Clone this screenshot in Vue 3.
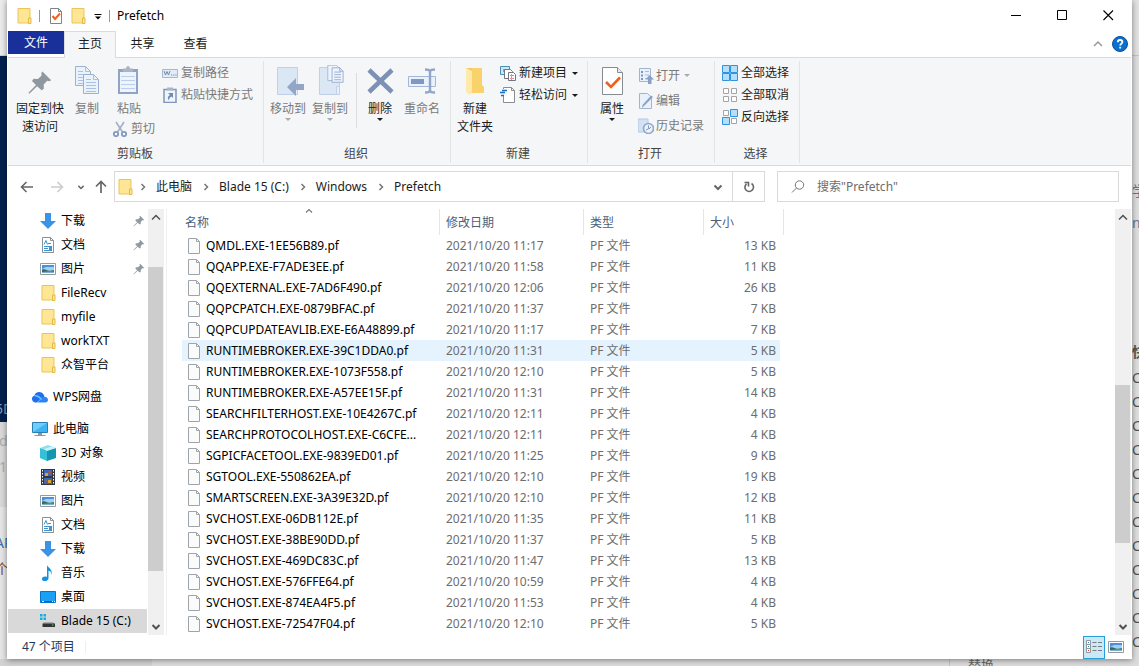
<script setup>
const folder = '<path d="M2 .5h12v14.5H2z" fill="#ffe694" stroke="#e8c55a"/><path d="M12.500 15V10h2.500v5.500h-2.500z" fill="#ffe694" stroke="#e3ba45"/>'
const pageFold = (c, f) => `<path d="M2.500 .5h8l3 3v12h-11z" fill="${f}" stroke="${c}"/><path d="M10.500 .5v3h3" fill="none" stroke="${c}"/>`
const picture = '<path d="M.5 2.500h15v11H.5z" fill="#fff" stroke="#919ba3"/><path d="M2 4h12v8H2z" fill="#9fd0f5"/><path d="M2 4h12v2H6L2 8z" fill="#4b8fe0"/><path d="M2 8.500c3-1 5 1 7 1.200s3-.7 5-.5V12H2z" fill="#356b62"/><path d="M2 11c4-.5 8-.8 12-.2V12H2z" fill="#7fb0c4"/>'
const pin = '<path d="M9.500 1l5.500 5.500-1.300.6-1.200-.2-2.200 2.300.1 2.600-1.400 1L6.200 10.300 1.300 14.900l-.5-.5 4.700-4.900L3 7l1-1.400 2.700.1L9 3.500 8.800 2z" fill="currentColor"/>'
const clip = (x) => `<path d="M5 4h20v25H5z" fill="#8fa3c4"/><path d="M7 7h16v20H7z" fill="#eef4fb"/><path d="M10 3.500h3c0-3.500 4-3.500 4 0h3V7H10z" fill="#a9b5c9"/>${x}`
const sheet = (x, y) => `<path d="M${x}.5 ${y}.5h10l5 5v14h-15z" fill="#eaf2fc" stroke="#9cb0cf"/><path d="M${x + 10}.5 ${y}.5v5h5M${x + 3} ${y + 5}.5h5M${x + 3} ${y + 8}.5h10M${x + 3} ${y + 11}.5h10M${x + 3} ${y + 14}.5h10M${x + 3} ${y + 17}.5h10" fill="none" stroke="#a9c0e0"/>`
const book = '<path d="M5.500 2.500h20v27h-20z" fill="#dce7f6" stroke="#c0d0e8"/><path d="M22.500 29.500v-8h3v8z" fill="#e8f0fa" stroke="#c0d0e8"/>'

const icons = {
  folder,
  pin,
  picture,
  page: pageFold('#a0a4a8', '#fafbfb'),
  check: pageFold('#7e8388', '#fff') + '<path d="M4.500 8l2.500 3 5-5.500" fill="none" stroke="#f0601c" stroke-width="2"/>',
  copy: sheet(4, 1) + sheet(12, 9),
  paste: clip('<path d="M8 11.500h14M8 15.500h14M8 19.500h14M8 23.500h14" stroke="#bdcfe8"/>'),
  cut: '<path d="M4 1l6.500 10M12 1L5.500 11" stroke="#a3b0c4" stroke-width="1.600" fill="none"/><circle cx="4" cy="13" r="2.200" fill="none" stroke="#8399bd" stroke-width="1.800"/><circle cx="12" cy="13" r="2.200" fill="none" stroke="#8399bd" stroke-width="1.800"/>',
  path: '<path d="M.5 4.500h15v8H.5z" fill="#e2ecf8" stroke="#a6b8d2"/><path d="M2 6l1.500 4L5 6.500 6.500 10 8 6M9 10h1.200M11.200 10h1.200M13.400 10h1.200" fill="none" stroke="#7488a9"/>',
  shortcut: '<path d="M2 2.500h12v13H2z" fill="#eef4fb" stroke="#8096bb" stroke-width="1.500"/><path d="M5 .5h6v3H5z" fill="#a9b5c9"/><path d="M6 6h5v5L9.500 9.500c-2 1-2.500 2-2.500 4C5 11 6 9 8 8z" fill="#7189b5"/>',
  moveTo: book + '<path d="M32 20h-8v-6l-9 9 9 9v-6h8z" transform="translate(0 -1)" fill="#93a6c6"/>',
  copyTo: book + '<g transform="translate(10 -1) scale(.85)"><path d="M4.500 1.500h10l4 4v14h-14z" fill="#eef4fc" stroke="#a1b4d2"/><path d="M9.500 4.500h9l4 4v13h-13z" fill="#eef4fc" stroke="#91a7ca"/><path d="M12 9.500h8M12 12.500h8M12 15.500h8M12 18.500h8M18.500 4.500v4h4" fill="none" stroke="#91a7ca"/></g>',
  remove: '<path d="M5 5l23 22M28 5L5 27" stroke="#7d90b5" stroke-width="4.500"/>',
  rename: '<path d="M2.500 11.500h27v10h-27z" fill="#e9f1fb" stroke="#a3b7d6"/><path d="M5 14h13v5H5z" fill="#8197bf"/><path d="M19 4.500c3 0 5 0 5 3v17c0 3-2 3-5 3M29 4.500c-3 0-5 0-5 3M24 24.500c0 3 2 3 5 3" fill="none" stroke="#91a5c8" stroke-width="2.400"/>',
  newFolder: '<path d="M13 3h10v17l2 2v6H11z" fill="#f9d26b"/><path d="M7 3l6 3v20l-2 4-4-3z" fill="#ffeaa9"/><path d="M7 3h6v3z" fill="#f4c95c"/>',
  newItem: '<path d="M.5 1.500h9v8h-9z" fill="#c8eaf8" stroke="#4e8db5"/><path d="M3 4h4v3H3z" fill="#58b4da"/><path d="M4.500 4.500h6l2 2v7h-8z" fill="#fff" stroke="#71777c"/><path d="M8.500 7.500h5l2 2v6h-7z" fill="#fff" stroke="#71777c"/><path d="M10 10.500h4M10 13.500h4" stroke="#d88a9c"/><path d="M11.500 9v6" stroke="#8cb1e0"/>',
  access: '<path d="M3.500 .5h8l3 3v12h-11z" fill="#fff" stroke="#8a8e92"/><path d="M11.500 .5v3h3" fill="none" stroke="#8a8e92"/><path d="M0 2h7v7H0z" fill="#f5f6f7"/><path d="M2 3.500h5M0 5.500h5M1 8.500h3" stroke="#1f6fc0" stroke-width="1.300"/>',
  properties: '<path d="M6.500 2.500h15l5 5v22h-20z" fill="#fff" stroke="#888c90"/><path d="M21.500 2.500v5h5" fill="#e6e8ea" stroke="#888c90"/><path d="M10 17l5 5L24 12.500" stroke="#f25f1a" stroke-width="2.600" fill="none"/>',
  open: '<path d="M1.500 .5h11v13h-11z" fill="#e9f1fb" stroke="#a2b4d0"/><path d="M3 3h2v2H3zM3 6.500h2v2H3zM3 10h2v2H3z" fill="#7f97bf"/><path d="M7 3.500h4M7 7h4M7 10.500h2" stroke="#a9bddb"/><path d="M11.500 7L7.500 11.500h2.500V16h3.500v-4.500H16z" fill="#8a9fc4"/>',
  edit: '<path d="M1.500 .5h8l4 4v11h-12z" fill="#e9f1fb" stroke="#a2b4d0"/><path d="M15 4L6 13l-2 2 .5-3L13 2.500z" fill="#8ba1c6"/>',
  history: '<path d="M0 1h10v13H0z" fill="#d3e1f4" stroke="#b5c8e4"/><circle cx="10.500" cy="10.500" r="5" fill="#eaf2fb" stroke="#91a6c9" stroke-width="1.600"/><path d="M10.500 7.500v3.300L8 12M11 11l2-2" stroke="#8197bf" fill="none"/>',
  selectAll: '<path d="M.5 .5h7v7h-7zM8.500 .5h7v7h-7zM.5 8.500h7v7h-7zM8.500 8.500h7v7h-7z" fill="#b4defa" stroke="#2f93e0"/>',
  selectNone: '<path d="M1.500 1.500h5v5h-5zM9.500 1.500h5v5h-5zM1.500 9.500h5v5h-5zM9.500 9.500h5v5h-5z" fill="#fff" stroke="#a2a4a6"/>',
  invert: '<path d="M1.500 1.500h5v5h-5zM9.500 9.500h5v5h-5z" fill="#fff" stroke="#a2a4a6"/><path d="M8.500 .5h7v7h-7zM.5 8.500h7v7h-7z" fill="#b4defa" stroke="#2f93e0"/>',
  download: '<path d="M5 0h6v8h5l-8 8-8-8h5z" fill="#3a93e4"/>',
  document: pageFold('#8c9196', '#fff') + '<path d="M4 7.500l2-4 1.500 4M8 6.500h3M4 9.500h8M4 11.500h4M4 13.500h8" fill="none" stroke="#3a92cf"/><path d="M9 10h3v3H9z" fill="#4f93b8"/>',
  cloud: '<path d="M3 13.500a3.600 3.600 0 0 1-.5-7C3 3 9 1.500 11.500 5.500c2 2 0 4-3 4.500L5 13.500z" fill="#1f6ff0"/><path d="M5.500 13.500l4-4.500c2-2.500 6.500-1.200 6.500 1.800 0 1.700-1 2.700-3 2.700z" fill="#2b85f5"/><path d="M2.500 6.800c3-.8 5 1 7 3.700" fill="none" stroke="#63c1ff" stroke-width="1.500"/>',
  pc: '<path d="M.5 1.500h15v10H.5z" fill="#3fb4f4" stroke="#2a7fb0"/><path d="M1 2h14L1 11z" fill="#6fcdf9"/><path d="M6 12h4v2h3.500v1H2.500v-1H6z" fill="#7f9bab"/>',
  cube: '<path d="M8 0l8 3-7 3.500L0 3z" fill="#8be0ec"/><path d="M0 3l7 2.500V16L0 13z" fill="#35c0d8"/><path d="M7 5.500L16 3v10l-9 3z" fill="#1495b0"/><path d="M4 4l8-2.500 4 1.500-9 3z" fill="#c8f3f8"/>',
  video: '<path d="M1 0h14v16H1z" fill="#34383c"/><path d="M4 1h8v6H4zM4 9h8v6H4z" fill="#3a68b8"/><path d="M5 4h3v3H5zM8 11h3v3H8z" fill="#e0a22c"/><path d="M8 2h3v3H8zM5 10h2v3H5z" fill="#b34d3d"/><path d="M2.500 1v14M13.500 1v14" stroke="#fff" stroke-dasharray="1.500 1.500"/>',
  music: '<path d="M7 0c1 3 6 4 4.500 10 0-3-1.500-4-3-4.200V13c0 4-7 4-6.500.8.200-2 3-2.800 5-1.800z" fill="#1191e8"/>',
  desktop: '<path d="M.5 2.500h15v11H.5z" fill="#1ba0f6" stroke="#0a74c4"/><path d="M1 12.500h14" stroke="#0b5fa5"/><path d="M2 12.500h2M12 12.500h1M14 12.500h1" stroke="#fff"/>',
  drive: '<path d="M0 1h2.500v2.500H0zM3.500 1H6v2.500H3.500zM0 4.500h2.500V7H0zM3.500 4.500H6V7H3.500z" fill="#12afe0"/><path d="M4 9h9l2 2H2.500z" fill="#a9adb0"/><path d="M2.500 10.500H15V14H2.500z" fill="#303438"/><path d="M12 12h1.500" stroke="#58e05a"/>',
  back: '<path d="M14 8H2.500M7.500 3l-5 5 5 5" fill="none" stroke="currentColor" stroke-width="1.600"/>',
  forward: '<path d="M2 8h11.500M8.500 3l5 5-5 5" fill="none" stroke="currentColor" stroke-width="1.600"/>',
  up: '<path d="M8 14V3M3 7.500L8 2.500l5 5" fill="none" stroke="currentColor" stroke-width="1.700"/>',
  chevDown: '<path d="M4.500 6.500L8 10l3.500-3.500" fill="none" stroke="currentColor" stroke-width="2"/>',
  chevUp: '<path d="M4 10l4-4 4 4" fill="none" stroke="currentColor" stroke-width="1.500"/>',
  chevRight: '<path d="M6.500 5l3 3-3 3" fill="none" stroke="currentColor" stroke-width="1.500"/>',
  refresh: '<path d="M11.200 5a4.300 4.300 0 1 1-5-.8M3.500 3.500h4v4" transform="matrix(-1 0 0 1 16 0)" fill="none" stroke="none"/><path d="M10.500 4.500a4.300 4.300 0 1 1-5 .3M3.500 3.500h4v4" fill="none" stroke="currentColor" stroke-width="1.600"/>',
  search: '<circle cx="9.500" cy="6" r="4.200" fill="none" stroke="currentColor"/><path d="M6.500 9L2 13.500" stroke="currentColor"/>',
  min: '<path d="M3 7.500h10" stroke="#000"/>',
  max: '<path d="M3.500 2.500h9v9h-9z" stroke="#000" fill="none"/>',
  close: '<path d="M3.500 2.500l9.500 9.500M13 2.500L3.500 12" stroke="#000" stroke-width="1.100"/>',
  menu: '<path d="M4.500 6.500h7" stroke="#000"/><path d="M5 8.500h6L8 11.500z" fill="#000"/>',
  help: '<circle cx="8" cy="8" r="7.500" fill="#0b6fd0" stroke="#0a4f9a"/><path d="M5.800 6.200c0-3 4.600-2.800 4.600-.2 0 1.700-2.200 1.700-2.200 3.400M8.200 10.800v1.700" stroke="#fff" stroke-width="1.800" fill="none"/>',
  details: '<path d="M.5 1.500h4v4h-4zM.5 5.500h4v4h-4zM.5 9.500h4v4h-4z" fill="#fff" stroke="#94999d"/><path d="M2 3h1v1H2z" fill="#3a78c8"/><path d="M2 7h1v1H2z" fill="#28927f"/><path d="M2 11h1v1H2z" fill="#d03a3a"/><path d="M6.500 3.500h4M12 3.500h4M6.500 7.500h4M12 7.500h4M6.500 11.500h4M12 11.500h4" stroke="#777c80"/>'
}

const crumbs = ['此电脑', 'Blade 15 (C:)', 'Windows', 'Prefetch']
const tree = [
  { icon: 'download', name: '下载', pinned: true },
  { icon: 'document', name: '文档', pinned: true },
  { icon: 'picture', name: '图片', pinned: true },
  { icon: 'folder', name: 'FileRecv' },
  { icon: 'folder', name: 'myfile' },
  { icon: 'folder', name: 'workTXT' },
  { icon: 'folder', name: '众智平台' },
  { icon: 'cloud', name: 'WPS网盘', root: true },
  { icon: 'pc', name: '此电脑', root: true },
  { icon: 'cube', name: '3D 对象' },
  { icon: 'video', name: '视频' },
  { icon: 'picture', name: '图片' },
  { icon: 'document', name: '文档' },
  { icon: 'download', name: '下载' },
  { icon: 'music', name: '音乐' },
  { icon: 'desktop', name: '桌面' },
  { icon: 'drive', name: 'Blade 15 (C:)', selected: true }
]
const files = [
  ['QMDL.EXE-1EE56B89.pf', '11:17', 13],
  ['QQAPP.EXE-F7ADE3EE.pf', '11:58', 11],
  ['QQEXTERNAL.EXE-7AD6F490.pf', '12:06', 26],
  ['QQPCPATCH.EXE-0879BFAC.pf', '11:37', 7],
  ['QQPCUPDATEAVLIB.EXE-E6A48899.pf', '11:17', 7],
  ['RUNTIMEBROKER.EXE-39C1DDA0.pf', '11:31', 5],
  ['RUNTIMEBROKER.EXE-1073F558.pf', '12:10', 5],
  ['RUNTIMEBROKER.EXE-A57EE15F.pf', '11:31', 14],
  ['SEARCHFILTERHOST.EXE-10E4267C.pf', '12:11', 4],
  ['SEARCHPROTOCOLHOST.EXE-C6CFE...', '12:11', 4],
  ['SGPICFACETOOL.EXE-9839ED01.pf', '11:25', 9],
  ['SGTOOL.EXE-550862EA.pf', '12:10', 19],
  ['SMARTSCREEN.EXE-3A39E32D.pf', '12:10', 12],
  ['SVCHOST.EXE-06DB112E.pf', '11:35', 11],
  ['SVCHOST.EXE-38BE90DD.pf', '11:37', 5],
  ['SVCHOST.EXE-469DC83C.pf', '11:47', 13],
  ['SVCHOST.EXE-576FFE64.pf', '10:59', 4],
  ['SVCHOST.EXE-874EA4F5.pf', '11:53', 4],
  ['SVCHOST.EXE-72547F04.pf', '12:10', 5]
]
const hovered = 5
</script>

<template>
  <div class="screen">
    <div class="behind-left" aria-hidden="true">
      <div class="bl-top"></div>
      <div class="bl-navy"><span>5D</span></div>
      <div class="bl-mid"><span>d</span><span>1</span></div>
      <div class="bl-low"><span class="blue">AP</span><span>个别</span></div>
    </div>

    <div class="window">
      <header class="titlebar">
        <svg class="i16" viewBox="0 0 16 16" v-html="icons.folder" />
        <i class="tick"></i>
        <button class="quick" aria-label="属性"><svg class="i16" viewBox="0 0 16 16" v-html="icons.check" /></button>
        <button class="quick" aria-label="新建文件夹"><svg class="i16" viewBox="0 0 16 16" v-html="icons.folder" /></button>
        <button class="quick narrow" aria-label="自定义快速访问工具栏"><svg class="i16" viewBox="0 0 16 16" v-html="icons.menu" /></button>
        <i class="tick"></i>
        <span class="title">Prefetch</span>
        <div class="controls">
          <button aria-label="最小化"><svg class="i16" viewBox="0 0 16 16" v-html="icons.min" /></button>
          <button aria-label="最大化"><svg class="i16" viewBox="0 0 16 16" v-html="icons.max" /></button>
          <button aria-label="关闭"><svg class="i16" viewBox="0 0 16 16" v-html="icons.close" /></button>
        </div>
      </header>

      <nav class="tabs">
        <button class="tab file">文件</button>
        <button class="tab active">主页</button>
        <button class="tab">共享</button>
        <button class="tab">查看</button>
        <div class="tab-tools">
          <button class="collapse" aria-label="折叠功能区"><svg class="i16" viewBox="0 0 16 16" v-html="icons.chevUp" /></button>
          <button aria-label="帮助"><svg class="i16" viewBox="0 0 16 16" v-html="icons.help" /></button>
        </div>
      </nav>

      <section class="ribbon">
        <div class="group g-clip">
          <div class="tools">
            <button class="big wide"><svg class="i32 pin-lg" viewBox="-2 -3 20 20" v-html="icons.pin" />固定到快<br>速访问</button>
            <button class="big off slim"><svg class="i32" viewBox="0 0 32 32" v-html="icons.copy" />复制</button>
            <div class="stack paste-col">
              <button class="big off slim"><svg class="i32" viewBox="0 0 32 32" v-html="icons.paste" />粘贴</button>
              <button class="small off"><svg class="i16" viewBox="0 0 16 16" v-html="icons.cut" />剪切</button>
            </div>
            <div class="stack">
              <button class="small off"><svg class="i16" viewBox="0 0 16 16" v-html="icons.path" />复制路径</button>
              <button class="small off"><svg class="i16" viewBox="0 0 16 16" v-html="icons.shortcut" />粘贴快捷方式</button>
            </div>
          </div>
          <div class="caption">剪贴板</div>
        </div>
        <div class="group g-org">
          <div class="tools">
            <button class="big off"><svg class="i32" viewBox="0 0 32 32" v-html="icons.moveTo" />移动到<i class="drop"></i></button>
            <button class="big off"><svg class="i32" viewBox="0 0 32 32" v-html="icons.copyTo" />复制到<i class="drop"></i></button>
            <i class="rule"></i>
            <button class="big slim"><svg class="i32" viewBox="0 0 32 32" v-html="icons.remove" />删除<i class="drop"></i></button>
            <button class="big off rename"><svg class="i32" viewBox="0 0 32 32" v-html="icons.rename" />重命名</button>
          </div>
          <div class="caption">组织</div>
        </div>
        <div class="group g-new">
          <div class="tools">
            <button class="big"><svg class="i32" viewBox="0 0 32 32" v-html="icons.newFolder" />新建<br>文件夹</button>
            <div class="stack">
              <button class="small"><svg class="i16" viewBox="0 0 16 16" v-html="icons.newItem" />新建项目<i class="drop"></i></button>
              <button class="small"><svg class="i16" viewBox="0 0 16 16" v-html="icons.access" />轻松访问<i class="drop"></i></button>
            </div>
          </div>
          <div class="caption">新建</div>
        </div>
        <div class="group g-open">
          <div class="tools">
            <button class="big"><svg class="i32" viewBox="0 0 32 32" v-html="icons.properties" />属性<i class="drop"></i></button>
            <div class="stack loose">
              <button class="small off"><svg class="i16" viewBox="0 0 16 16" v-html="icons.open" />打开<i class="drop"></i></button>
              <button class="small off"><svg class="i16" viewBox="0 0 16 16" v-html="icons.edit" />编辑</button>
              <button class="small off"><svg class="i16" viewBox="0 0 16 16" v-html="icons.history" />历史记录</button>
            </div>
          </div>
          <div class="caption">打开</div>
        </div>
        <div class="group g-sel">
          <div class="tools">
            <div class="stack">
              <button class="small"><svg class="i16" viewBox="0 0 16 16" v-html="icons.selectAll" />全部选择</button>
              <button class="small"><svg class="i16" viewBox="0 0 16 16" v-html="icons.selectNone" />全部取消</button>
              <button class="small"><svg class="i16" viewBox="0 0 16 16" v-html="icons.invert" />反向选择</button>
            </div>
          </div>
          <div class="caption">选择</div>
        </div>
      </section>

      <div class="navbar">
        <div class="history">
          <button aria-label="返回"><svg class="i16" viewBox="0 0 16 16" v-html="icons.back" /></button>
          <button class="faint" aria-label="前进"><svg class="i16" viewBox="0 0 16 16" v-html="icons.forward" /></button>
          <button class="tiny" aria-label="最近浏览的位置"><svg class="i12" viewBox="0 0 16 16" v-html="icons.chevDown" /></button>
          <button aria-label="上移"><svg class="i16" viewBox="0 0 16 16" v-html="icons.up" /></button>
        </div>
        <div class="address">
          <svg class="i16" viewBox="0 0 16 16" v-html="icons.folder" />
          <template v-for="(c, i) in crumbs" :key="c">
            <svg class="i16 sep" :class="{ first: i === 0 }" viewBox="0 0 16 16" v-html="icons.chevRight" />
            <a href="#">{{ c }}</a>
          </template>
          <button class="open-list" aria-label="以前的位置"><svg class="i16" viewBox="0 0 16 16" v-html="icons.chevDown" /></button>
          <button class="reload" aria-label="刷新"><svg class="i16" viewBox="0 0 16 16" v-html="icons.refresh" /></button>
        </div>
        <label class="search">
          <svg class="i16" viewBox="0 0 16 16" v-html="icons.search" />
          <input type="text" aria-label="搜索" placeholder="搜索&quot;Prefetch&quot;">
        </label>
      </div>

      <div class="body">
        <nav class="tree">
          <a v-for="(t, i) in tree" :key="i" href="#" :class="{ root: t.root, selected: t.selected }">
            <svg class="i16" viewBox="0 0 16 16" v-html="icons[t.icon]" />
            <span>{{ t.name }}</span>
            <svg v-if="t.pinned" class="i12 pinned" viewBox="0 0 16 16" v-html="icons.pin" />
          </a>
        </nav>
        <div class="scroll tree-scroll">
          <svg class="i16" viewBox="0 0 16 16" v-html="icons.chevUp" />
          <i class="before"></i><i class="thumb"></i><i class="after"></i>
          <svg class="i16" viewBox="0 0 16 16" v-html="icons.chevDown" />
        </div>
        <main class="list">
          <table>
            <thead>
              <tr>
                <th class="c-name">名称<svg class="i12 sort" viewBox="0 0 16 16" v-html="icons.chevUp" /></th>
                <th class="c-date">修改日期</th>
                <th class="c-type">类型</th>
                <th class="c-size">大小</th>
              </tr>
            </thead>
            <tbody>
              <tr v-for="(f, i) in files" :key="f[0]" :class="{ hover: i === hovered }">
                <td><div class="name"><svg class="i16" viewBox="0 0 16 16" v-html="icons.page" />{{ f[0] }}</div></td>
                <td>2021/10/20 {{ f[1] }}</td>
                <td>PF 文件</td>
                <td class="num">{{ f[2] }} KB</td>
              </tr>
            </tbody>
          </table>
        </main>
        <div class="scroll list-scroll">
          <svg class="i16" viewBox="0 0 16 16" v-html="icons.chevUp" />
          <i class="before"></i><i class="thumb"></i><i class="after"></i>
          <svg class="i16" viewBox="0 0 16 16" v-html="icons.chevDown" />
        </div>
      </div>

      <footer class="status">
        <span>47 个项目</span>
        <div class="views">
          <button class="on" aria-label="详细信息"><svg class="i16" viewBox="0 0 16 16" v-html="icons.details" /></button>
          <button aria-label="大图标"><svg class="i16" viewBox="0 0 16 16" v-html="icons.picture" /></button>
        </div>
      </footer>
    </div>

    <div class="behind-right" aria-hidden="true">
      <div class="br-top"></div>
      <div class="br-tags"><span>学</span><span>n</span></div>
      <div class="br-list"><b>快</b><span v-for="n in 12" :key="n">C</span></div>
    </div>
    <div class="behind-bottom" aria-hidden="true">
      <div class="bb-left"></div>
      <div class="bb-mid"></div>
      <div class="bb-right"><span>替换</span></div>
    </div>
  </div>
</template>

<style>
body {
  background: #e6e6e6;
}
</style>

<style scoped>
.screen {
  display: grid;
  grid-template-columns: 7px minmax(0, 1fr) 7px;
  grid-template-rows: minmax(0, 1fr) 7px;
  height: 100vh;
  overflow: hidden;
  font: 12px/18px "Noto Sans", "Noto Sans CJK SC", sans-serif;
  color: #1b1b1b;
}
.screen * {
  box-sizing: border-box;
}
button {
  border: 0;
  padding: 0;
  background: none;
  font: inherit;
  color: inherit;
  white-space: nowrap;
}
a {
  color: inherit;
  text-decoration: none;
  white-space: nowrap;
}
svg {
  display: block;
  flex: none;
}
.i12 { width: 12px; height: 12px; }
.i16 { width: 16px; height: 16px; }
.i32 { width: 32px; height: 32px; }

/* desktop behind the window */
.behind-left,
.behind-right {
  display: flex;
  flex-direction: column;
  overflow: hidden;
  font-size: 14px;
  line-height: 26px;
}
.behind-left span,
.behind-right span,
.behind-right b {
  display: block;
  white-space: nowrap;
}
.behind-left span { margin-left: -5px; }
.behind-left .bl-mid span { margin-left: -1px; }
.bl-top { height: 56px; border-bottom: 1px solid #ccc; background: #ebebeb; }
.bl-navy {
  display: flex;
  align-items: flex-end;
  height: 366px;
  background: #00204f;
  color: #8d99b0;
}
.bl-mid { height: 85px; padding-top: 6px; background: #d9d9d9; color: #a9adb5; }
.bl-low { flex: 1; padding-top: 23px; background: #e6e6e6; color: #7b4a2c; }
.blue { color: #3d6fa5; }
.behind-right { background: #dedede; color: #555; }
.br-top { height: 56px; border-bottom: 1px solid #c4c4c4; background: #e2e2e2; }
.br-tags { height: 284px; padding-top: 119px; color: #6b7190; line-height: 32px; }
.br-list { line-height: 24px; }
.br-list b { margin-bottom: 2px; }
.behind-bottom {
  grid-column: 1 / -1;
  display: grid;
  grid-template-columns: 152fr 798fr 189fr;
  overflow: hidden;
  background: #dcdcdc;
}
.bb-left { background: #d2d2d2; }
.bb-mid { border-right: 1px solid #c4c4c4; }
.bb-right { padding-left: 18px; font-size: 13px; line-height: 12px; color: #666; }

.window {
  z-index: 1;
  display: flex;
  flex-direction: column;
  min-height: 0;
  padding: 0 1px;
  background: #fff;
  box-shadow: 0 1px 6px rgba(0, 0, 0, .45);
}

/* title bar */
.titlebar {
  display: flex;
  align-items: center;
  height: 31px;
  padding-left: 8px;
  color: #000;
}
.tick { width: 1px; height: 12px; margin: 0 8px 0 7px; background: #999; }
.quick { margin-right: 6px; }
.quick.narrow { margin: 0 -4px 0 -2px; }
.title { margin-left: -1px; }
.controls { display: flex; margin-left: auto; }
.controls button { display: grid; place-items: center; width: 46px; height: 31px; }

/* tabs */
.tabs {
  display: flex;
  height: 27px;
  border-bottom: 1px solid #dadbdc;
}
.tab { width: 53px; height: 26px; }
.tab.file { width: 56px; height: 23px; background: #19309b; color: #fff; }
.tab.active {
  width: 52px;
  height: 27px;
  padding-bottom: 2px;
  border: 1px solid #dadbdc;
  border-bottom: 0;
  background: #f5f6f7;
}
.tab-tools { display: flex; align-items: center; gap: 6px; margin-left: auto; padding-right: 3px; }
.collapse { color: #999; }

/* ribbon */
.ribbon {
  display: flex;
  height: 108px;
  padding: 3px 0 2px;
  border-bottom: 1px solid #dadbdc;
  background: #f5f6f7;
}
.group {
  display: flex;
  flex-direction: column;
  border-right: 1px solid #e2e3e4;
}
.g-clip { width: 256px; padding-left: 4px; }
.g-org { width: 187px; padding-left: 3px; }
.g-new { width: 137px; padding-left: 3px; }
.g-open { width: 127px; padding-left: 3px; }
.g-sel { width: 85px; padding-left: 7px; }
.tools { display: flex; flex: 1; align-items: flex-start; }
.caption { height: 18px; margin-left: -5px; text-align: center; color: #444; }
.g-sel .caption { margin-left: -10px; }
.big { width: 42px; padding-top: 4px; text-align: center; }
.big svg { margin: 0 auto 3px; }
.big.wide { width: 56px; }
.big.slim { width: 38px; }
.off { color: #7a7a7a; }
.pin-lg { color: #8f979f; }
.drop {
  display: block;
  width: 0;
  margin: 0 auto;
  border: 3px solid transparent;
  border-top-color: currentColor;
  border-bottom: 0;
}
.off .drop { opacity: .6; }
.rule { width: 1px; height: 55px; margin: 12px 4px 0 5px; background: #dcdddf; }
.big.rename { margin-left: 2px; }
.stack { display: flex; flex-direction: column; align-items: flex-start; padding: 1px 0 0 4px; }
.small { display: flex; align-items: center; gap: 3px; height: 22px; }
.small .drop { margin: 0 0 0 2px; }
.paste-col { width: 52px; padding-top: 0; }
.paste-col .small { margin-left: 2px; }
.g-sel .stack { padding-left: 0; }
.g-open .stack { padding-left: 5px; }
.g-open .loose { padding-top: 2px; }
.loose .small { height: 25px; gap: 2px; }

/* navigation */
.navbar {
  display: grid;
  grid-template-columns: 106px minmax(0, 651fr) minmax(0, 354fr);
  align-items: center;
  height: 43px;
  padding: 0 12px 2px 0;
}
.history { display: flex; align-items: center; padding-left: 11px; color: #666; }
.history button { width: 16px; display: grid; place-items: center; }
.history .faint { margin-left: 14px; color: #ccc; }
.history .tiny { margin: 0 4px 0 8px; }
.address,
.search {
  display: flex;
  align-items: center;
  height: 31px;
  border: 1px solid #d9d9d9;
}
.address { padding-left: 2px; }
.address .sep { margin: 0 5px 0 6px; color: #777; }
.address .sep.first { margin-left: 2px; }
.open-list { margin-left: auto; padding: 0 6px; color: #666; }
.reload { display: grid; place-items: center; width: 32px; height: 29px; border-left: 1px solid #d9d9d9; color: #666; }
.search { margin-left: 12px; padding-left: 12px; color: #777; }
.search input {
  flex: 1;
  min-width: 0;
  margin-left: 11px;
  padding: 0;
  border: 0;
  outline: 0;
  background: none;
  font: inherit;
}
.search input::placeholder { color: #6d6d6d; opacity: 1; }

/* content */
.body { display: flex; flex: 1; min-height: 0; }
.tree { width: 139px; overflow: hidden; }
.tree a {
  display: flex;
  align-items: center;
  gap: 5px;
  height: 24px;
  padding-left: 32px;
  color: #000;
}
.tree a.root { margin-top: 8px; padding-left: 24px; }
.tree a.selected { background: #d9d9d9; }
.tree .pinned { margin: 0 2px 0 auto; color: #8f9aa2; }
.scroll {
  display: flex;
  flex-direction: column;
  align-items: stretch;
  width: 16px;
  background: #f0f0f0;
  color: #505050;
}
.scroll svg { height: 17px; }
.tree-scroll { margin-left: 1px; }
.thumb { background: #cdcdcd; margin-right: 1px; }
.tree-scroll .before { flex: 41; }
.tree-scroll .thumb { flex: 304; }
.tree-scroll .after { flex: 47; }
.list-scroll .before { flex: 159; }
.list-scroll .thumb { flex: 158; }
.list-scroll .after { flex: 75; }
.list { flex: 1; min-width: 0; margin-left: 2px; padding-left: 15px; border-left: 1px solid #f0f0f0; overflow: hidden; }
table { border-collapse: separate; border-spacing: 0; table-layout: fixed; width: 602px; }
th {
  height: 26px;
  padding: 2px 6px 0;
  border-right: 1px solid #e5e5e5;
  font-weight: 400;
  text-align: left;
  color: #4c607a;
}
.c-name { position: relative; width: 258px; padding-left: 3px; }
.c-date { width: 144px; }
.c-type { width: 120px; }
.sort { position: absolute; top: -4px; left: calc(50% - 8px); color: #777; }
td { height: 21px; padding: 0 6px; color: #6d6d6d; white-space: nowrap; }
.hover td { background: #e5f3ff; }
.name { display: flex; align-items: center; gap: 4px; color: #000; }
.name svg { margin-left: -2px; }
td.num {
  padding-right: 4px;
  border-right: 4px solid transparent;
  background-clip: padding-box;
  text-align: right;
}

.status {
  display: flex;
  align-items: center;
  height: 24px;
  padding: 0 4px 0 14px;
  color: #1e395b;
}
.status span { padding-right: 10px; border-right: 1px solid #eee; line-height: 12px; }
.views { display: flex; margin-left: auto; }
.views button { display: grid; place-items: center; width: 22px; height: 23px; }
.views .on { border: 1px solid #26a0da; background: #cbe8f6; }
</style>
